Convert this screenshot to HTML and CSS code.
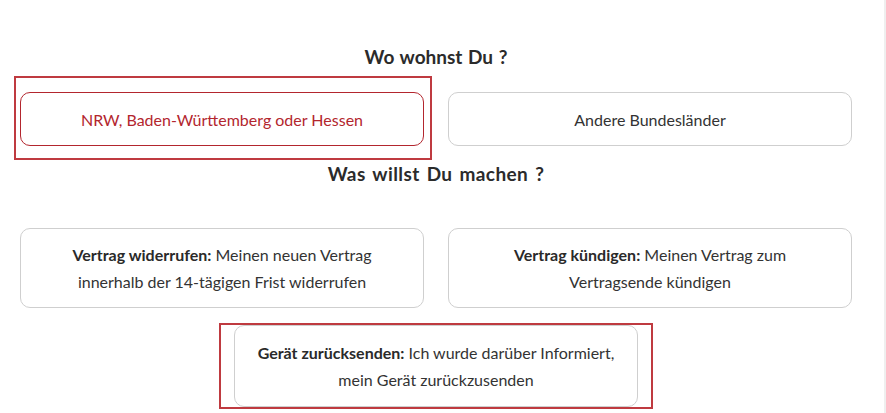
FILE: index.html
```html
<!DOCTYPE html>
<html lang="de">
<head>
<meta charset="utf-8">
<title>Widerruf</title>
<link rel="stylesheet" href="styles.css">
</head>
<body>
<div class="page">
  <div class="content">
    <h2 class="question q1">Wo wohnst Du ?</h2>
    <div class="options">
      <div class="option selected mark-a"><span>NRW, Baden-Württemberg oder Hessen</span></div>
      <div class="option"><span>Andere Bundesländer</span></div>
    </div>
    <h2 class="question q2">Was willst Du machen ?</h2>
    <div class="options two-line">
      <div class="option"><p class="label"><b>Vertrag widerrufen:</b> Meinen neuen Vertrag innerhalb der 14-tägigen Frist widerrufen</p></div>
      <div class="option"><p class="label"><b>Vertrag kündigen:</b> Meinen Vertrag zum Vertragsende kündigen</p></div>
    </div>
    <div class="single">
      <div class="option mark-b"><p class="label"><b>Gerät zurücksenden:</b> Ich wurde darüber Informiert, mein Gerät zurückzusenden</p></div>
    </div>
  </div>
</div>
</body>
</html>
```

FILE: styles.css
```css
html, body {
  margin: 0;
  padding: 0;
  background: #fff;
}
body {
  font-family: Lato, "Open Sans", sans-serif;
  color: #333;
  width: 886px;
  height: 413px;
  overflow: hidden;
}
.page {
  width: 884px;
  height: 413px;
  border-right: 2px solid #efefef;
}
.content {
  width: 872px;
}
.question {
  margin: 0;
  text-align: center;
  font-size: 19px;
  font-weight: 700;
  color: #2b2b2b;
  line-height: 24px;
  word-spacing: 1px;
}
.q1 { padding-top: 45px; }
.q2 { padding-top: 16px; word-spacing: 2px; letter-spacing: 0.4px; }
.options {
  display: grid;
  grid-template-columns: 404px 404px;
  column-gap: 24px;
  padding: 0 20px;
  margin-top: 23px;
}
.two-line { margin-top: 42px; }
.option {
  position: relative;
  box-sizing: border-box;
  height: 54px;
  border: 1px solid #cfcfcf;
  border-radius: 10px;
  display: flex;
  align-items: center;
  justify-content: center;
  text-align: center;
  font-size: 16px;
  color: #333;
  padding: 0 40px;
}
.label {
  margin: 0;
}
.option b { color: #2a2a2a; }
.two-line .option,
.single .option {
  height: 80px;
  line-height: 27px;
}
.selected {
  border-color: #b3262e;
  color: #b3262e;
}
.single {
  display: flex;
  justify-content: center;
  margin-top: 17px;
}
.single .option {
  width: 404px;
  height: 82px;
  padding: 0 14px;
}
.mark-a::after,
.mark-b::after {
  content: "";
  position: absolute;
  border: 2px solid #bf3a40;
  pointer-events: none;
}
.mark-a::after {
  left: -7px;
  right: -9px;
  top: -17px;
  bottom: -15px;
}
.mark-b::after {
  left: -16px;
  right: -16px;
  top: -3px;
  bottom: -3px;
}
```
